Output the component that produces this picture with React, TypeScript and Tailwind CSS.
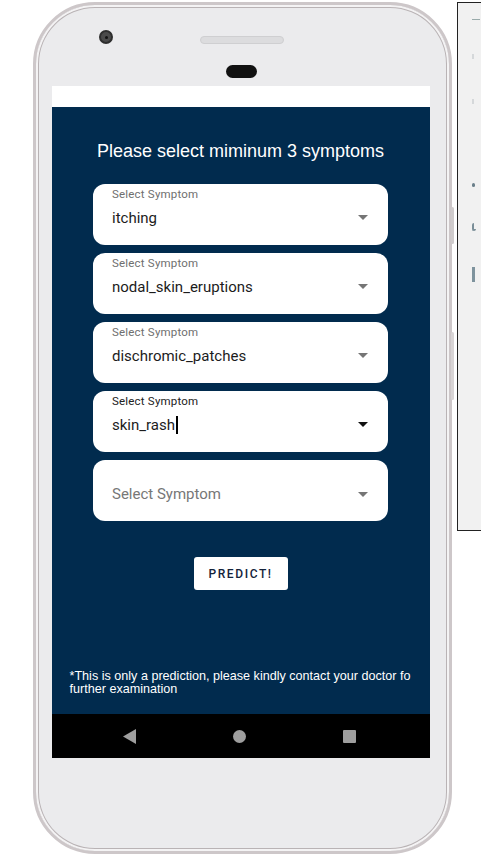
import React from "react";

function Arrow({ dark }: { dark?: boolean }) {
  return (
    <svg width="10" height="5" viewBox="0 0 10 5" className="shrink-0">
      <path d="M0 0 L10 0 L5 5 Z" fill={dark ? "#111" : "#757575"} />
    </svg>
  );
}

function Field({ value, focused }: { value?: string; focused?: boolean }) {
  if (!value) {
    return (
      <div className="h-[61px] w-[295px] rounded-[12px] bg-white flex items-center pl-[19px] pr-[20px] pt-[7px] font-['Roboto',sans-serif]">
        <div className="flex-1 text-[15px] text-[#777]">Select Symptom</div>
        <Arrow />
      </div>
    );
  }
  return (
    <div className="h-[61px] w-[295px] rounded-[12px] bg-white flex pl-[19px] pr-[20px] pt-[4px] font-['Roboto',sans-serif]">
      <div className="flex-1 flex flex-col">
        <div className={`text-[11.5px] leading-[13px] tracking-[0.2px] ${focused ? "text-[#222]" : "text-[#6f6f6f]"}`}>Select Symptom</div>
        <div className="text-[15px] leading-[20px] mt-[7px] text-[#1c1c1c] flex items-center">
          {value}
          {focused && <span className="inline-block w-[1.5px] h-[18px] bg-black ml-[1px]" />}
        </div>
      </div>
      <div className="mt-[27px]">
        <Arrow dark={focused} />
      </div>
    </div>
  );
}

export default function App() {
  return (
    <div className="w-[481px] h-[864px] bg-white flex relative overflow-hidden">
      <div className="shrink-0 ml-[33px] mt-[2px] w-[419px] h-[852px] rounded-[62px] bg-[#ebebed] border-[3px] border-[#cdc7c9] shadow-[inset_0_0_0_2px_#f4f3f4,inset_0_0_0_3px_#b9b3b5] relative flex flex-col items-center">
        <div className="absolute left-[63px] top-[25px] w-[14px] h-[14px] rounded-full bg-[#4a4a4a] border-[2px] border-[#2e2e2e] flex items-center justify-center">
          <div className="w-[3px] h-[3px] rounded-full bg-[#111]" />
        </div>
        <div className="absolute left-[164px] top-[31px] w-[84px] h-[8px] rounded-full bg-[#dcdcde] border border-[#cfcfd1]" />
        <div className="absolute left-[190px] top-[60px] w-[31px] h-[13px] rounded-full bg-[#111]" />
        <div className="absolute right-[-5px] top-[202px] w-[3px] h-[37px] bg-[#cfcbcc] rounded-sm" />
        <div className="absolute right-[-5px] top-[327px] w-[3px] h-[68px] bg-[#d8d4d5] rounded-sm" />

        <div className="mt-[81px] ml-[-4px] w-[378px] flex flex-col">
          <div className="h-[21px] bg-white" />
          <div className="h-[607px] bg-[#012b4e] flex flex-col items-center">
            <div className="mt-[33px] text-[18px] leading-[22px] text-white font-['Liberation_Sans',Arial,sans-serif]">
              Please select miminum 3 symptoms
            </div>
            <div className="mt-[22px] flex flex-col gap-[8px]">
              <Field value="itching" />
              <Field value="nodal_skin_eruptions" />
              <Field value="dischromic_patches" />
              <Field value="skin_rash" focused />
              <Field />
            </div>
            <button className="mt-[36px] w-[94px] h-[33px] rounded-[3px] bg-white text-[#13223a] text-[12px] font-medium tracking-[1.6px] font-['Roboto',sans-serif] flex items-center justify-center">
              PREDICT!
            </button>
            <div className="mt-[80px] self-stretch pl-[18px] pr-[14px] text-[12.6px] leading-[13px] text-white font-['Liberation_Sans',Arial,sans-serif] overflow-hidden whitespace-nowrap">
              <div>*This is only a prediction, please kindly contact your doctor fo</div>
              <div>further examination</div>
            </div>
          </div>
          <div className="h-[44px] bg-black flex items-center justify-between pl-[71px] pr-[74px]">
            <svg width="14" height="15" viewBox="0 0 14 15">
              <path d="M0 7.5 L13 0 L13 15 Z" fill="#9e9e9e" />
            </svg>
            <div className="w-[13px] h-[13px] rounded-full bg-[#9e9e9e]" />
            <div className="w-[13px] h-[13px] rounded-[1px] bg-[#9e9e9e]" />
          </div>
        </div>
      </div>

      <div className="shrink-0 ml-[5px] mt-[2px] w-[40px] h-[529px] border border-[#222] bg-[#f1f1f1] flex flex-col items-start pl-[14px]">
        <div className="mt-[16px] w-[8px] h-[1px] bg-[#9aa]" />
        <div className="mt-[34px] w-[2px] h-[5px] bg-[#d5d8da]" />
        <div className="mt-[40px] w-[2px] h-[5px] bg-[#d5d8da]" />
        <div className="mt-[79px] w-[3px] h-[4px] bg-[#6a7f8a] rounded-full" />
        <div className="mt-[36px] w-[4px] h-[8px] border-l-2 border-b-2 border-[#7a8e98] rounded-sm" />
        <div className="mt-[36px] w-[3px] h-[15px] bg-[#7e939d]" />
      </div>
    </div>
  );
}
